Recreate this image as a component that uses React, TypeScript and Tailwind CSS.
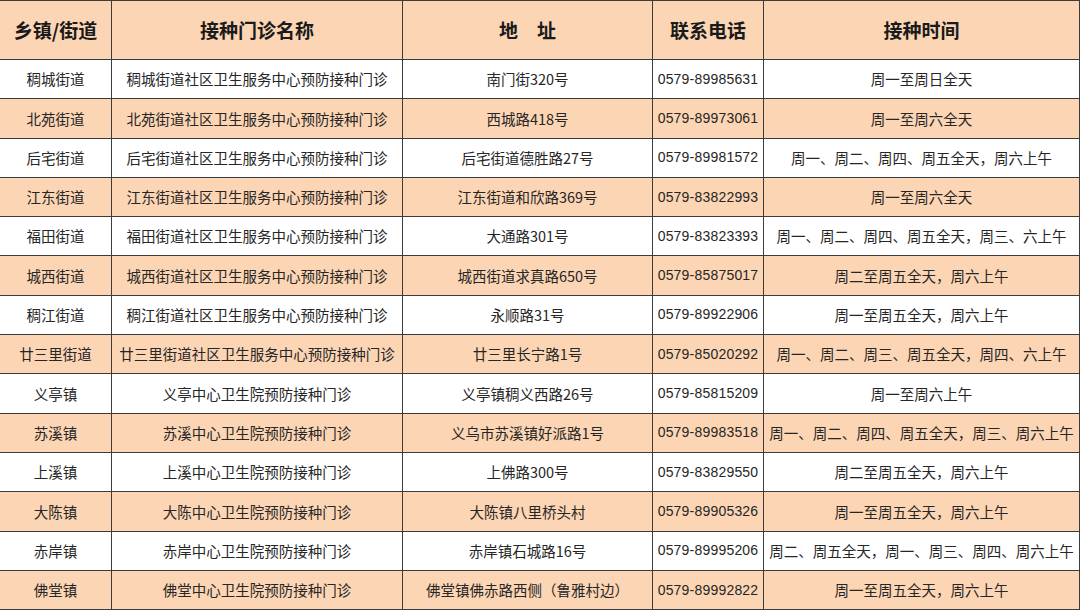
const rows = [
  { town: '稠城街道', clinic: '稠城街道社区卫生服务中心预防接种门诊', addr: '南门街320号', phone: '0579-89985631', time: '周一至周日全天' },
  { town: '北苑街道', clinic: '北苑街道社区卫生服务中心预防接种门诊', addr: '西城路418号', phone: '0579-89973061', time: '周一至周六全天' },
  { town: '后宅街道', clinic: '后宅街道社区卫生服务中心预防接种门诊', addr: '后宅街道德胜路27号', phone: '0579-89981572', time: '周一、周二、周四、周五全天，周六上午' },
  { town: '江东街道', clinic: '江东街道社区卫生服务中心预防接种门诊', addr: '江东街道和欣路369号', phone: '0579-83822993', time: '周一至周六全天' },
  { town: '福田街道', clinic: '福田街道社区卫生服务中心预防接种门诊', addr: '大通路301号', phone: '0579-83823393', time: '周一、周二、周四、周五全天，周三、六上午' },
  { town: '城西街道', clinic: '城西街道社区卫生服务中心预防接种门诊', addr: '城西街道求真路650号', phone: '0579-85875017', time: '周二至周五全天，周六上午' },
  { town: '稠江街道', clinic: '稠江街道社区卫生服务中心预防接种门诊', addr: '永顺路31号', phone: '0579-89922906', time: '周一至周五全天，周六上午' },
  { town: '廿三里街道', clinic: '廿三里街道社区卫生服务中心预防接种门诊', addr: '廿三里长宁路1号', phone: '0579-85020292', time: '周一、周二、周三、周五全天，周四、六上午' },
  { town: '义亭镇', clinic: '义亭中心卫生院预防接种门诊', addr: '义亭镇稠义西路26号', phone: '0579-85815209', time: '周一至周六上午' },
  { town: '苏溪镇', clinic: '苏溪中心卫生院预防接种门诊', addr: '义乌市苏溪镇好派路1号', phone: '0579-89983518', time: '周一、周二、周四、周五全天，周三、周六上午' },
  { town: '上溪镇', clinic: '上溪中心卫生院预防接种门诊', addr: '上佛路300号', phone: '0579-83829550', time: '周二至周五全天，周六上午' },
  { town: '大陈镇', clinic: '大陈中心卫生院预防接种门诊', addr: '大陈镇八里桥头村', phone: '0579-89905326', time: '周一至周五全天，周六上午' },
  { town: '赤岸镇', clinic: '赤岸中心卫生院预防接种门诊', addr: '赤岸镇石城路16号', phone: '0579-89995206', time: '周二、周五全天，周一、周三、周四、周六上午' },
  { town: '佛堂镇', clinic: '佛堂中心卫生院预防接种门诊', addr: '佛堂镇佛赤路西侧（鲁雅村边）', phone: '0579-89992822', time: '周一至周五全天，周六上午' },
];

const headers = ['乡镇/街道', '接种门诊名称', '地　址', '联系电话', '接种时间'];

export default function App() {
  return (
    <div className="w-[1080px] h-[610px] bg-white overflow-hidden">
      <div
        className="grid grid-cols-[111px_290px_249px_110px_315px] grid-rows-[58px_repeat(14,38.3px)] gap-px bg-[#3c3c3c] pt-px pr-px pb-px text-[#262626] whitespace-nowrap"
        style={{ fontFamily: '"Noto Sans CJK SC", "Noto Sans", sans-serif' }}
      >
        {headers.map((h) => (
          <div key={h} className="bg-[#fcd5b4] flex items-center justify-center text-[19px] font-bold text-[#1a1a1a]">
            {h}
          </div>
        ))}
        {rows.map((r, i) => {
          const bg = i % 2 === 1 ? 'bg-[#fcd5b4]' : 'bg-white';
          return [
            <div key={`a${i}`} className={`${bg} flex items-center justify-center text-[14.5px]`}>{r.town}</div>,
            <div key={`b${i}`} className={`${bg} flex items-center justify-center text-[14.5px]`}>{r.clinic}</div>,
            <div key={`c${i}`} className={`${bg} flex items-center justify-center text-[14.5px]`}>{r.addr}</div>,
            <div
              key={`d${i}`}
              className={`${bg} flex items-center justify-center text-[14px] tracking-[0.2px]`}
              style={{ fontFamily: '"Liberation Sans", Arial, sans-serif' }}
            >
              {r.phone}
            </div>,
            <div key={`e${i}`} className={`${bg} flex items-center justify-center text-[14.5px]`}>{r.time}</div>,
          ];
        })}
      </div>
    </div>
  );
}
